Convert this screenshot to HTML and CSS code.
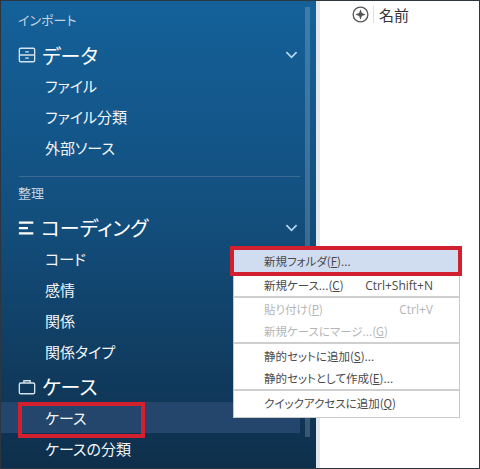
FILE: index.html
```html
<!DOCTYPE html>
<html lang="ja">
<head>
  <meta charset="UTF-8" />
  <title>ケース</title>
  <link rel="stylesheet" href="styles.css">
</head>
<body>
  <div class="app">
    <aside class="sidebar">
      <div class="scroll-track"></div>

      <p class="section-label">インポート</p>
      <div class="group-head">
        <svg class="group-icon" viewBox="0 0 20 20"><rect x="1.500" y="2.500" width="17" height="15" rx="1.500"/><path d="M1.500 10h17M8 6.500h4M8 13.500h4"/></svg>
        <span>データ</span>
        <svg class="chevron" viewBox="0 0 14 8"><path d="M1.500 1l5.500 5.500L12.500 1"/></svg>
      </div>
      <a class="item">ファイル</a>
      <a class="item">ファイル分類</a>
      <a class="item">外部ソース</a>

      <div class="divider"></div>

      <p class="section-label label-sort">整理</p>
      <div class="group-head head-coding">
        <svg class="group-icon" viewBox="0 0 20 20"><path class="bars" d="M1 4h16M1 10h10M1 16h16"/></svg>
        <span>コーディング</span>
        <svg class="chevron" viewBox="0 0 14 8"><path d="M1.500 1l5.500 5.500L12.500 1"/></svg>
      </div>
      <a class="item">コード</a>
      <a class="item">感情</a>
      <a class="item">関係</a>
      <a class="item">関係タイプ</a>
      <div class="group-head head-case">
        <svg class="group-icon" viewBox="0 0 20 20"><rect x="1.500" y="5.500" width="17" height="12" rx="1.500"/><path d="M6.500 5.500V3h7v2.500"/></svg>
        <span>ケース</span>
      </div>
      <a class="item item-active">ケース</a>
      <a class="item">ケースの分類</a>
    </aside>

    <main class="content">
      <div class="column-head">
        <svg class="sort-icon" viewBox="0 0 18 18"><circle cx="9" cy="9" r="7.800"/><path class="star" d="M9 3.500L10.500 7.500L14.500 9L10.500 10.500L9 14.500L7.500 10.500L3.500 9L7.500 7.500Z"/></svg>
        <span class="column-name">名前</span>
      </div>
    </main>

    <div class="menu">
      <div class="menu-row row-hover"><span>新規フォルダ(<u>F</u>)...</span></div>
      <div class="menu-row row-end"><span>新規ケース...(<u>C</u>)</span><span class="shortcut">Ctrl+Shift+N</span></div>
      <div class="menu-row row-off"><span>貼り付け(<u>P</u>)</span><span class="shortcut">Ctrl+V</span></div>
      <div class="menu-row row-off row-end"><span>新規ケースにマージ...(<u>G</u>)</span></div>
      <div class="menu-row"><span>静的セットに追加(<u>S</u>)...</span></div>
      <div class="menu-row row-end"><span>静的セットとして作成(<u>E</u>)...</span></div>
      <div class="menu-row row-last"><span>クイックアクセスに追加(<u>Q</u>)</span></div>
    </div>

    <div class="callout callout-menu"></div>
    <div class="callout callout-item"></div>
  </div>
</body>
</html>
```

FILE: styles.css
```css
html, body {
  margin: 0;
  padding: 0;
  height: 100%;
  overflow: hidden;
}

body {
  font-family: "Noto Sans CJK JP", "Noto Sans", sans-serif;
  font-feature-settings: "palt";
  background: #fff;
}

.app {
  position: relative;
  display: flex;
  width: 480px;
  height: 469px;
  box-sizing: border-box;
  border: 1px solid #2c3640;
  overflow: hidden;
}

.sidebar {
  position: relative;
  width: 319px;
  flex-shrink: 0;
  box-sizing: border-box;
  padding: 9px 0 0 17px;
  background: linear-gradient(180deg, #14619a 0%, #134f7e 45%, #0e2f4b 100%);
  color: #fff;
  border-right: 4px solid #e3e7ec;
}

.scroll-track {
  position: absolute;
  top: 6px;
  right: 6px;
  width: 5px;
  height: 430px;
  background: rgba(255, 255, 255, 0.18);
}

.section-label {
  margin: 0;
  height: 20px;
  line-height: 20px;
  font-size: 13px;
  color: #c5d3df;
}

.label-sort {
  margin-top: 6px;
}

.group-head {
  display: flex;
  align-items: center;
  gap: 6px;
  height: 30px;
  margin-top: 10px;
  font-size: 20px;
  padding-right: 18px;
}

.group-head span {
  flex: 1;
}

.head-coding {
  height: 31px;
  margin-top: 9px;
  gap: 5px;
}

.head-case {
  height: 31px;
  margin-top: 4px;
}

.group-icon {
  width: 18px;
  height: 18px;
  fill: none;
  stroke: #d5e3ee;
  stroke-width: 1.500;
}

.group-icon .bars {
  stroke: #fff;
  stroke-width: 2.500;
}

.chevron {
  width: 13px;
  height: 8px;
  fill: none;
  stroke: #b9d6ea;
  stroke-width: 1.800;
}

.item {
  display: flex;
  align-items: center;
  height: 31px;
  padding-left: 27px;
  font-size: 15px;
  color: #f2f6f9;
}

.item-active {
  margin-left: -17px;
  margin-right: 16px;
  padding-left: 44px;
  background: #24466d;
}

.divider {
  height: 1px;
  margin: 13px 16px 0 1px;
  background: #3f6b90;
}

.content {
  flex: 1;
  background: #fff;
}

.column-head {
  display: flex;
  align-items: center;
  height: 26px;
  padding-left: 32px;
}

.sort-icon {
  width: 17px;
  height: 17px;
  padding-right: 4px;
  border-right: 1px solid #dfdfdf;
  fill: none;
  stroke: #555;
  stroke-width: 1.400;
}

.sort-icon .star {
  fill: #555;
  stroke: none;
}

.column-name {
  margin-left: 5px;
  font-size: 15px;
  color: #333;
}

/* context menu sits over the sidebar */
.menu {
  position: absolute;
  top: 246px;
  left: 232px;
  width: 227px;
  box-sizing: border-box;
  background: #fff;
  border: 1px solid #c9c9c9;
  font-size: 11.500px;
  color: #4a4a4a;
}

.menu-row {
  display: flex;
  justify-content: space-between;
  align-items: center;
  height: 23px;
  padding: 0 26px 0 30px;
  box-sizing: border-box;
}

.row-hover {
  height: 26px;
  background: #d0dcef;
}

.row-off {
  height: 22px;
  color: #b5b5b5;
}

.row-end {
  border-bottom: 2px solid #cfcfcf;
  height: 24px;
}

.row-last {
  height: 26px;
  padding-bottom: 3px;
}

.shortcut {
  font-family: "Open Sans", sans-serif;
  font-size: 12px;
}

.menu-row u {
  text-underline-offset: 1px;
}

.callout {
  position: absolute;
  box-sizing: border-box;
  border: 4px solid #d3202e;
}

.callout-menu {
  top: 245px;
  left: 229px;
  width: 232px;
  height: 30px;
}

.callout-item {
  top: 401px;
  left: 17px;
  width: 127px;
  height: 36px;
}
```
